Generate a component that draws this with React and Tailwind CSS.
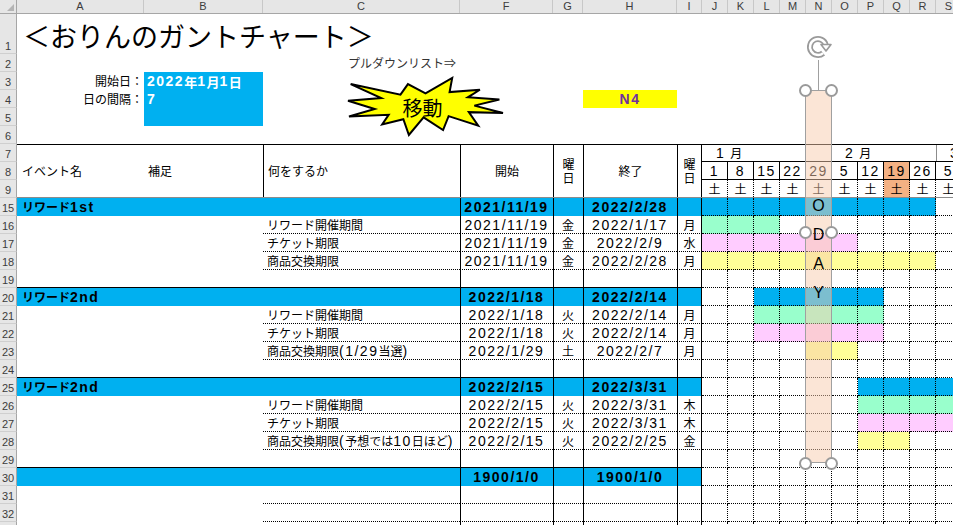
import React from 'react';

// shared text styles
const NUM = "font-['Liberation_Sans'] text-[14px] tracking-[1.5px]";
const HEADFONT = "font-['Liberation_Sans'] text-[11px] text-[#3c3c3c]";

const BAR = {
  b: 'bg-[#00b0f0]',
  g: 'bg-[#99ffcc]',
  p: 'bg-[#ffccff]',
  y: 'bg-[#ffff99]',
};

const COLS = [
  ['A', 'w-[127px]'], ['B', 'w-[119px]'], ['C', 'w-[197px]'], ['F', 'w-[93px]'],
  ['G', 'w-[30px]'], ['H', 'w-[94px]'], ['I', 'w-[25px]'],
  ['J', 'w-[26px]'], ['K', 'w-[26px]'], ['L', 'w-[26px]'], ['M', 'w-[26px]'], ['N', 'w-[26px]'],
  ['O', 'w-[26px]'], ['P', 'w-[26px]'], ['Q', 'w-[26px]'], ['R', 'w-[26px]'], ['S', 'w-[26px]'],
];

const DAYS = ['1', '8', '15', '22', '29', '5', '12', '19', '26', '5'];

const ROWS = [
  { n: 15, kind: 'group', a: 'リワード1st', f: '2021/11/19', h: '2022/2/28', bar: 'bbbbbbbbb.' },
  { n: 16, kind: 'item', c: 'リワード開催期間', f: '2021/11/19', g: '金', h: '2022/1/17', i: '月', bar: 'ggg.......' },
  { n: 17, kind: 'item', c: 'チケット期限', f: '2021/11/19', g: '金', h: '2022/2/9', i: '水', bar: 'pppppp....' },
  { n: 18, kind: 'item', c: '商品交換期限', f: '2021/11/19', g: '金', h: '2022/2/28', i: '月', bar: 'yyyyyyyyy.' },
  { n: 19, kind: 'gap', bar: '..........' },
  { n: 20, kind: 'group', a: 'リワード2nd', f: '2022/1/18', h: '2022/2/14', bar: '..bbbbb...' },
  { n: 21, kind: 'item', c: 'リワード開催期間', f: '2022/1/18', g: '火', h: '2022/2/14', i: '月', bar: '..ggggg...' },
  { n: 22, kind: 'item', c: 'チケット期限', f: '2022/1/18', g: '火', h: '2022/2/14', i: '月', bar: '..ppppp...' },
  { n: 23, kind: 'item', c: '商品交換期限(1/29当選)', f: '2022/1/29', g: '土', h: '2022/2/7', i: '月', bar: '....yy....' },
  { n: 24, kind: 'gap', bar: '..........' },
  { n: 25, kind: 'group', a: 'リワード2nd', f: '2022/2/15', h: '2022/3/31', bar: '......bbbb' },
  { n: 26, kind: 'item', c: 'リワード開催期間', f: '2022/2/15', g: '火', h: '2022/3/31', i: '木', bar: '......gggg' },
  { n: 27, kind: 'item', c: 'チケット期限', f: '2022/2/15', g: '火', h: '2022/3/31', i: '木', bar: '......pppp' },
  { n: 28, kind: 'item', c: '商品交換期限(予想では10日ほど)', f: '2022/2/15', g: '火', h: '2022/2/25', i: '金', bar: '......yy..' },
  { n: 29, kind: 'gap', bar: '..........' },
  { n: 30, kind: 'group', f: '1900/1/0', h: '1900/1/0', bar: '..........' },
  { n: 31, kind: 'item', bar: '..........' },
  { n: 32, kind: 'item', bar: '..........' },
  { n: 33, kind: 'item', bar: '..........' },
];

const SEAL = '10800,5800 14522,0 14155,5325 18380,4457 16702,7315 21097,8137 17607,10475 21600,13290 16837,12942 18145,18095 14020,14457 13247,19737 10532,14935 8485,21600 7715,15627 4762,17617 5667,13937 135,14587 3722,11775 0,8615 4627,7617 370,2295 7312,6320 8352,2295';

// latin runs get the wide number face, japanese stays in Noto
function Mix({ t }) {
  return t.split(/([\x21-\x7e]+)/).filter(Boolean).map((p, i) =>
    /^[\x21-\x7e]+$/.test(p)
      ? <span key={i} className={NUM}>{p}</span>
      : <span key={i}>{p}</span>
  );
}

function RH({ n, h = 'h-[18px]' }) {
  return (
    <div className={`w-[17px] shrink-0 ${h} bg-[#e6e6e6] border-r border-b border-r-[#a6a6a6] border-b-[#cfcfcf] flex items-end justify-center leading-[14px] ${HEADFONT}`}>
      {n}
    </div>
  );
}

function BodyRow({ r }) {
  const grp = r.kind === 'group';
  const bg = grp ? 'bg-[#00b0f0] font-bold' : '';
  const ab = r.kind === 'gap' ? 'border-b border-black' : '';
  const cb = r.kind === 'gap' ? 'border-b border-black' : r.kind === 'item' ? 'border-b border-dotted border-black' : '';
  return (
    <div className="flex h-[18px] shrink-0">
      <RH n={r.n} />
      <div className={`w-[127px] shrink-0 flex items-center pl-[5px] whitespace-nowrap ${bg} ${ab}`}>
        {r.a && <Mix t={r.a} />}
      </div>
      <div className={`w-[119px] shrink-0 ${bg} ${ab}`} />
      <div className={`w-[197px] shrink-0 flex items-center pl-[4px] whitespace-nowrap ${bg} ${cb}`}>
        {r.c && <Mix t={r.c} />}
      </div>
      <div className={`w-[93px] shrink-0 flex items-center justify-center shadow-[inset_1px_0_0_#000] ${bg} ${cb}`}>
        {r.f && <span className={NUM}>{r.f}</span>}
      </div>
      <div className={`w-[30px] shrink-0 flex items-center justify-center shadow-[inset_1px_0_0_#000] ${bg} ${cb}`}>
        {r.g}
      </div>
      <div className={`w-[94px] shrink-0 flex items-center justify-center shadow-[inset_1px_0_0_#000] ${bg} ${cb}`}>
        {r.h && <span className={NUM}>{r.h}</span>}
      </div>
      <div className={`w-[25px] shrink-0 flex items-center justify-center shadow-[inset_1px_0_0_#000,inset_-1px_0_0_#000] ${bg} ${cb}`}>
        {r.i}
      </div>
      {r.bar.split('').map((b, k) => (
        <div key={k} className={`w-[26px] shrink-0 border-r border-b border-dotted border-black ${BAR[b] || ''}`} />
      ))}
    </div>
  );
}

export default function App() {
  return (
    <div className="relative w-[953px] h-[525px] overflow-hidden bg-white text-black text-[12px] leading-none font-['Noto_Sans_CJK_JP',sans-serif]">
      {/* column letters */}
      <div className={`flex h-[14px] bg-[#e6e6e6] border-b border-[#a6a6a6] ${HEADFONT}`}>
        <div className="w-[17px] shrink-0 border-r border-[#a6a6a6] flex items-end justify-end p-[2px]">
          <svg width="7" height="7" viewBox="0 0 7 7"><polygon points="7,0 7,7 0,7" fill="#b4b4b4" /></svg>
        </div>
        {COLS.map(([l, w]) => (
          <div key={l} className={`${w} shrink-0 border-r border-[#c8c8c8] flex items-center justify-center`}>{l}</div>
        ))}
      </div>

      {/* rows 1-6 */}
      <div className="flex h-[40px]">
        <RH n={1} h="h-[40px]" />
        <div className="flex items-center pl-[6px] pt-[2px] text-[27px] whitespace-nowrap">＜おりんのガントチャート＞</div>
      </div>
      <div className="flex h-[18px]">
        <RH n={2} />
        <div className="w-[127px] shrink-0" />
        <div className="w-[119px] shrink-0" />
        <div className="w-[197px] shrink-0 flex items-center justify-end pr-[4px] text-[#333]">プルダウンリスト⇒</div>
      </div>
      <div className="flex h-[18px]">
        <RH n={3} />
        <div className="w-[127px] shrink-0 flex items-center justify-end pr-[1px]">開始日：</div>
        <div className="w-[119px] shrink-0 bg-[#00b0f0] text-white font-bold flex items-center pl-[3px] text-[13px]">
          <Mix t="2022年1月1日" />
        </div>
      </div>
      <div className="flex h-[18px]">
        <RH n={4} />
        <div className="w-[127px] shrink-0 flex items-center justify-end pr-[1px]">日の間隔：</div>
        <div className="w-[119px] shrink-0 bg-[#00b0f0] text-white font-bold flex items-center pl-[3px]">
          <span className={NUM}>7</span>
        </div>
        <div className="w-[197px] shrink-0" />
        <div className="w-[93px] shrink-0" />
        <div className="w-[30px] shrink-0" />
        <div className="w-[94px] shrink-0 bg-[#ffff00] flex items-center justify-center">
          <span className={`${NUM} font-bold text-[#7030a0]`}>N4</span>
        </div>
      </div>
      <div className="flex h-[18px]">
        <RH n={5} />
        <div className="w-[127px] shrink-0" />
        <div className="w-[119px] shrink-0 bg-[#00b0f0]" />
      </div>
      <div className="flex h-[18px]">
        <RH n={6} />
      </div>

      {/* rows 7-9 header */}
      <div className="flex h-[54px]">
        <div className="flex flex-col shrink-0">
          <RH n={7} />
          <RH n={8} />
          <RH n={9} />
        </div>
        <div className="flex border-t border-b border-black border-b-[#8c8c8c]">
          <div className="w-[127px] shrink-0 flex items-center pl-[5px]">イベント名</div>
          <div className="w-[119px] shrink-0 flex items-center pl-[4px]">補足</div>
          <div className="w-[197px] shrink-0 border-l border-black flex items-center pl-[4px]">何をするか</div>
          <div className="w-[93px] shrink-0 border-l border-black flex items-center justify-center">開始</div>
          <div className="w-[30px] shrink-0 border-l border-black flex flex-col items-center justify-center leading-[14px]">
            <span>曜</span><span>日</span>
          </div>
          <div className="w-[94px] shrink-0 border-l border-black flex items-center justify-center">終了</div>
          <div className="w-[25px] shrink-0 border-l border-r border-black flex flex-col items-center justify-center leading-[14px]">
            <span>曜</span><span>日</span>
          </div>
          <div className="flex flex-col">
            <div className="flex h-[17px] border-b border-black">
              <div className="w-[130px] shrink-0 flex items-center pl-[14px]">
                <span className={NUM}>1</span><span className="ml-[5px]">月</span>
              </div>
              <div className="w-[104px] shrink-0 flex items-center pl-[13px]">
                <span className={NUM}>2</span><span className="ml-[5px]">月</span>
              </div>
              <div className="w-[26px] shrink-0 border-l border-[#8c8c8c] flex items-center pl-[13px]">
                <span className={NUM}>3</span>
              </div>
            </div>
            <div className="flex h-[18px] border-b border-black">
              {DAYS.map((d, k) => (
                <div key={k} className={`w-[26px] shrink-0 border-r border-black flex items-center justify-center ${k === 7 ? 'bg-[#f4b183]' : ''}`}>
                  <span className={NUM}>{d}</span>
                </div>
              ))}
            </div>
            <div className="flex h-[17px]">
              {DAYS.map((d, k) => (
                <div key={k} className={`w-[26px] shrink-0 border-r border-dotted border-black flex items-center justify-center ${k === 7 ? 'bg-[#f4b183]' : ''}`}>
                  土
                </div>
              ))}
            </div>
          </div>
        </div>
      </div>

      {/* rows 15- */}
      {ROWS.map((r) => <BodyRow key={r.n} r={r} />)}

      {/* explosion shape "移動" */}
      <svg className="absolute left-[348px] top-[78px] w-[155px] h-[57px] overflow-visible" viewBox="0 0 21600 21600" preserveAspectRatio="none">
        <polygon points={SEAL} fill="#ffff00" stroke="#000" strokeWidth="2" vectorEffect="non-scaling-stroke" />
      </svg>
      <div className="absolute left-[348px] top-[78px] w-[155px] h-[57px] flex items-center justify-center text-[20px] pt-[2px] pr-[6px]">移動</div>

      {/* TODAY shape, selected */}
      <div className="absolute left-[805px] top-[90px] w-[27px] h-[373px] bg-[#f8cbad]/50 border border-[#a0a0a0] flex flex-col items-center pt-[100px] font-['Liberation_Sans'] text-[16px] leading-[29px]">
        <span>O</span><span>D</span><span>A</span><span>Y</span>
      </div>
      <div className="absolute left-[818px] top-[60px] w-px h-[30px] bg-[#a0a0a0]" />
      <svg className="absolute left-[801px] top-[33px] w-[34px] h-[28px]" viewBox="0 0 34 28">
        <path d="M24.7 11.9 A8 8 0 1 0 22.1 20.1" fill="none" stroke="#9a9a9a" strokeWidth="6" />
        <path d="M24.7 11.9 A8 8 0 1 0 22.1 20.1" fill="none" stroke="#fff" strokeWidth="2.5" />
        <polygon points="20,11.5 30,11.5 25,18" fill="#fff" stroke="#9a9a9a" strokeWidth="1.6" strokeLinejoin="round" />
      </svg>
      <div className="absolute left-[799px] top-[84px] w-[13px] h-[13px] rounded-full bg-white border-2 border-[#9a9a9a]" />
      <div className="absolute left-[825px] top-[84px] w-[13px] h-[13px] rounded-full bg-white border-2 border-[#9a9a9a]" />
      <div className="absolute left-[799px] top-[226px] w-[13px] h-[13px] rounded-full bg-white border-2 border-[#9a9a9a]" />
      <div className="absolute left-[825px] top-[226px] w-[13px] h-[13px] rounded-full bg-white border-2 border-[#9a9a9a]" />
      <div className="absolute left-[799px] top-[457px] w-[13px] h-[13px] rounded-full bg-white border-2 border-[#9a9a9a]" />
      <div className="absolute left-[825px] top-[457px] w-[13px] h-[13px] rounded-full bg-white border-2 border-[#9a9a9a]" />
    </div>
  );
}
